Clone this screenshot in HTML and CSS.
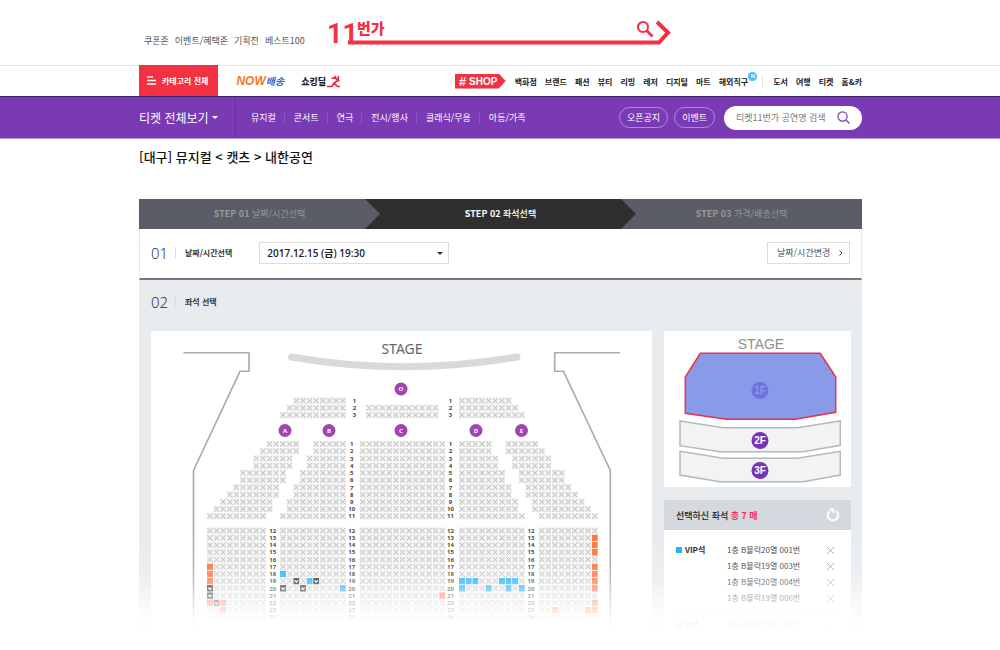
FILE: index.html
```
<!DOCTYPE html>
<html lang="ko">
<head>
    <meta charset="UTF-8">
    <meta name="viewport" content="width=device-width, initial-scale=1.0">
    <title>11번가 티켓 - 좌석선택</title>
    <link rel="stylesheet" href="styles.css">
</head>
<body>
    <header class="top">
        <div class="wrap top-inner">
            <nav class="top-links">
                <a href="#">쿠폰존</a>
                <a href="#">이벤트/혜택존</a>
                <a href="#">기획전</a>
                <a href="#">베스트100</a>
            </nav>
            <a href="#" class="logo" aria-label="11번가">
                <svg width="350" height="48" viewBox="-6 -10 350 48">
                    <g fill="#f43142">
                        <text class="logo-num" x="-1" y="22">11</text>
                        <text class="logo-name" x="29" y="13">번가</text>
                    </g>
                    <path d="M20 21.500H331L340 11.500L329 1" fill="none" stroke="#f43142" stroke-width="4"/>
                    <circle cx="315" cy="6" r="5" fill="none" stroke="#f43142" stroke-width="2.200"/>
                    <path d="M318.500 9.500L324.500 15.500" stroke="#f43142" stroke-width="2.600"/>
                </svg>
            </a>
        </div>
    </header>

    <div class="gnb">
        <div class="wrap gnb-inner">
            <button class="category" type="button">
                <svg width="10" height="9" viewBox="0 0 10 9"><path d="M0 1H6M0 4.500H9M0 8H9" stroke="#fff" stroke-width="1.300"/></svg>
                카테고리 전체
            </button>
            <a href="#" class="now"><b>NOW</b><span>배송</span></a>
            <a href="#" class="deal">쇼킹딜<svg width="14" height="13" viewBox="0 0 14 13"><path d="M0 11.500H5L7 8L10.500 11.500H13M7 8L11 5.500L12.500 6M7.500 1L9 3.500L11 5.500M4.500 3L9 3.500M11.500 1L11 5.500" fill="none" stroke="#e8233b" stroke-width="1.600"/></svg></a>
            <a href="#" class="shop"><i>#</i>SHOP</a>
            <nav class="gnb-links">
                <a href="#">백화점</a>
                <a href="#">브랜드</a>
                <a href="#">패션</a>
                <a href="#">뷰티</a>
                <a href="#">리빙</a>
                <a href="#">레저</a>
                <a href="#">디지털</a>
                <a href="#">마트</a>
                <a href="#" class="has-new">해외직구<span class="new">N</span></a>
                <a href="#" class="divided">도서</a>
                <a href="#">여행</a>
                <a href="#">티켓</a>
                <a href="#">홈&amp;카</a>
            </nav>
        </div>
    </div>

    <div class="ticket-bar">
        <div class="wrap ticket-inner">
            <button class="ticket-all" type="button">티켓 전체보기 <span class="caret"></span></button>
            <nav class="ticket-nav">
                <a href="#">뮤지컬</a>
                <a href="#">콘서트</a>
                <a href="#">연극</a>
                <a href="#">전시/행사</a>
                <a href="#">클래식/무용</a>
                <a href="#">아동/가족</a>
            </nav>
            <a href="#" class="pill">오픈공지</a>
            <a href="#" class="pill">이벤트</a>
            <form class="search">
                <input type="text" placeholder="티켓11번가 공연명 검색" aria-label="공연명 검색">
                <button type="submit" aria-label="검색">
                    <svg width="13" height="13" viewBox="0 0 13 13"><circle cx="5.500" cy="5.500" r="4.600" fill="none" stroke="#7a3ab5" stroke-width="1.200"/><path d="M9 9L12.500 12.500" stroke="#7a3ab5" stroke-width="1.300"/></svg>
                </button>
            </form>
        </div>
    </div>

    <main class="wrap">
        <h1>[대구] 뮤지컬 &lt; 캣츠 &gt; 내한공연</h1>

        <ol class="steps">
            <li><strong>STEP 01</strong> 날짜/시간선택</li>
            <li class="active"><strong>STEP 02</strong> 좌석선택</li>
            <li><strong>STEP 03</strong> 가격/배송선택</li>
        </ol>

        <section class="date-row">
            <span class="num">01</span>
            <label class="label" for="date">날짜/시간선택</label>
            <div class="select">
                <select id="date">
                    <option>2017.12.15 (금) 19:30</option>
                </select>
                <span class="caret"></span>
            </div>
            <button class="change" type="button">날짜/시간변경
                <svg width="4" height="6" viewBox="0 0 4 6"><path d="M0.500 0.500L3 3L0.500 5.500" fill="none" stroke="#444"/></svg>
            </button>
        </section>

        <section class="seat-section">
            <div class="seat-head">
                <span class="num">02</span>
                <h2 class="label">좌석 선택</h2>
            </div>

            <div class="seat-body">
                <div class="map">
                    <svg id="seatMap" viewBox="151 331 501 304">
                        <defs>
                            <symbol id="seat-x" viewBox="0 0 6 6.500">
                                <rect width="6" height="6.500" fill="#eee"/>
                                <path d="M0.300 0.500L5.700 6M5.700 0.500L0.300 6" stroke="#bdbdbd" stroke-width="0.900"/>
                            </symbol>
                            <symbol id="seat-v" viewBox="0 0 6 6.500">
                                <rect width="6" height="6.500" fill="#333"/>
                                <path d="M1.400 2.500L3 4.200L4.600 2.500" fill="none" stroke="#fff" stroke-width="1.200"/>
                            </symbol>
                            <symbol id="seat-o" viewBox="0 0 6 6.500"><rect width="6" height="6.500" fill="#ff7542"/></symbol>
                            <symbol id="seat-b" viewBox="0 0 6 6.500"><rect width="6" height="6.500" fill="#26b1fa"/></symbol>
                        </defs>
                        <text class="stage" x="402" y="354">STAGE</text>
                        <path d="M291.500 357Q404 376.500 517 357" fill="none" stroke="#d9d9d9" stroke-width="7" stroke-linecap="round"/>
                        <path d="M183.500 352.700H249V371.300H240L193.500 470.500V635M620 352.700H554.700V371.300H563.500L610.300 470.500V635" fill="none" stroke="#aaa" stroke-width="1.600"/>
                        <g id="seats"></g>
                    </svg>
                </div>

                <aside class="side">
                    <div class="floors">
                        <svg viewBox="664 331 187 156">
                            <text class="mini-stage" x="761" y="349">STAGE</text>
                            <path d="M700.300 353.300H820.300L835.700 377V412.300L795 419.300H726.700L685.300 413.300V377Z" fill="#879be8" stroke="#ec2f4b" stroke-width="1.500"/>
                            <g fill="#f3f3f3" stroke="#b0bac3" stroke-width="1.500">
                                <path d="M680 421L723.300 427.700H797.300L840.300 421V445.300L803.300 451.700H720L680 445.700Z"/>
                                <path d="M680 451.300L723.300 458.300H797.300L840.300 451.300V475L803.300 481.700H720L680 475Z"/>
                            </g>
                            <circle cx="760" cy="390.500" r="8.500" fill="#6f74db"/>
                            <circle cx="760" cy="440.500" r="8.500" fill="#7734b8"/>
                            <circle cx="760" cy="470.500" r="8.500" fill="#7734b8"/>
                            <text class="floor dim" x="760" y="394">1F</text>
                            <text class="floor" x="760" y="444">2F</text>
                            <text class="floor" x="760" y="474">3F</text>
                        </svg>
                    </div>

                    <div class="picked">
                        <div class="picked-head">
                            <h3>선택하신 좌석 <em>총 7 매</em></h3>
                            <button type="button" aria-label="초기화">
                                <svg width="14" height="14" viewBox="0 0 14 14"><path d="M10 3A5.200 5.200 0 1 1 4 3" fill="none" stroke="#fff" stroke-width="2"/><path d="M3 0.500H8V5.500Z" fill="#fff"/></svg>
                            </button>
                        </div>
                        <div class="grade">
                            <span class="grade-name vip">VIP석</span>
                            <ul>
                                <li>1층 B블럭20열 001번 <button type="button" aria-label="삭제"></button></li>
                                <li>1층 B블럭19열 003번 <button type="button" aria-label="삭제"></button></li>
                                <li>1층 B블럭20열 004번 <button type="button" aria-label="삭제"></button></li>
                                <li>1층 B블럭19열 006번 <button type="button" aria-label="삭제"></button></li>
                            </ul>
                        </div>
                        <div class="grade">
                            <span class="grade-name r">R석</span>
                            <ul>
                                <li>1층 A블럭20열 001번 <button type="button" aria-label="삭제"></button></li>
                            </ul>
                        </div>
                    </div>
                </aside>
            </div>
            <div class="fade"></div>
        </section>
    </main>

    <script src="seats.js"></script>
</body>
</html>
```
FILE: styles.css
```
* {
    box-sizing: border-box;
}

body {
    margin: 0;
    background: #fff;
    color: #333;
    font-family: "Noto Sans CJK KR", sans-serif;
    font-size: 9px;
}

a {
    color: inherit;
    text-decoration: none;
}

button {
    margin: 0;
    padding: 0;
    border: 0;
    background: none;
    color: inherit;
    font: inherit;
    cursor: pointer;
}

svg {
    display: block;
}

ol, ul, h1, h2, h3 {
    margin: 0;
    padding: 0;
    list-style: none;
}

.wrap {
    max-width: 724px;
    margin: 0 auto;
    padding-left: 1px;
}

/* top */
.top {
    border-bottom: 1px solid #e8e8e8;
}

.top-inner {
    display: flex;
    height: 65px;
    padding: 11px 0 0 6px;
}

.top-links {
    display: flex;
    gap: 6px;
    width: 178px;
    padding-top: 23px;
    line-height: 14px;
    color: #555;
    white-space: nowrap;
}

.logo-num {
    font: 700 27px Roboto, sans-serif;
}

.logo-name {
    font-size: 15px;
    font-weight: 900;
}

/* category bar */
.gnb-inner {
    display: flex;
    align-items: center;
    height: 30px;
}

.category {
    display: flex;
    align-items: center;
    gap: 5px;
    height: 31px;
    margin-top: -1px;
    padding: 0 10px 0 8px;
    background: #f43142;
    color: #fff;
    font-size: 8px;
    font-weight: 700;
    white-space: nowrap;
}

.now {
    display: flex;
    align-items: center;
    margin-left: 18px;
    font-style: italic;
    font-weight: 700;
}

.now b {
    color: #f9771e;
    font: italic 700 12px "Liberation Sans", sans-serif;
}

.now span {
    color: #3d6bd0;
    font-size: 10px;
    line-height: 14px;
}

.deal {
    display: flex;
    align-items: center;
    gap: 1px;
    margin-left: 17px;
    color: #222;
    font-weight: 900;
}

.shop {
    display: flex;
    align-items: center;
    gap: 3px;
    width: 51px;
    height: 15px;
    margin-left: auto;
    padding-left: 4px;
    background: #f43142;
    clip-path: polygon(0 0, 44px 0, 100% 50%, 44px 100%, 0 100%);
    color: #fff;
    font: 700 10px "Liberation Sans", sans-serif;
}

.shop i {
    font-size: 13px;
}

.gnb-links {
    display: flex;
    gap: 8px;
    margin-left: 9px;
    color: #222;
    font-size: 8px;
    font-weight: 700;
    white-space: nowrap;
}

.has-new {
    position: relative;
}

.new {
    position: absolute;
    top: -4px;
    left: 100%;
    width: 9px;
    height: 9px;
    border-radius: 50%;
    background: #4cbdec;
    color: #fff;
    font: 700 6px/9px "Liberation Sans", sans-serif;
    text-align: center;
}

.divided {
    margin-left: 6px;
    padding-left: 10px;
    border-left: 1px solid #ddd;
}

/* ticket bar */
.ticket-bar {
    border-top: 1px solid #3f2266;
    border-bottom: 1px solid #b497d2;
    background: #7a3ab5;
    color: #fff;
}

.ticket-inner {
    display: flex;
    align-items: center;
    height: 41px;
}

.ticket-all {
    display: flex;
    align-items: center;
    gap: 3px;
    width: 97px;
    height: 100%;
    border-right: 1px solid #6a2da3;
    font-size: 12px;
    white-space: nowrap;
}

.caret {
    border: 3px solid transparent;
    border-top-color: currentColor;
    border-bottom: 0;
}

.ticket-nav {
    display: flex;
    margin-left: 6px;
    font-size: 9px;
    line-height: 12px;
    white-space: nowrap;
}

.ticket-nav a {
    padding: 0 8px 0 9px;
}

.ticket-nav a + a {
    border-left: 1px solid #8b55c0;
}

.pill {
    height: 21px;
    margin-right: 6px;
    padding: 0 7px;
    border: 1px solid #b48ad8;
    border-radius: 11px;
    line-height: 19px;
    white-space: nowrap;
}

.ticket-nav + .pill {
    margin-left: auto;
}

.search {
    display: flex;
    align-items: center;
    width: 138px;
    height: 24px;
    margin-left: 3px;
    padding: 0 12px;
    border-radius: 12px;
    background: #fff;
}

.search input {
    flex: 1;
    min-width: 0;
    padding: 0;
    border: 0;
    outline: 0;
    background: none;
    font: inherit;
}

.search input::placeholder {
    color: #777;
}

/* title and steps */
h1 {
    padding: 9px 0 33px;
    color: #111;
    font-size: 13px;
    font-weight: 500;
    line-height: 18px;
}

.steps {
    display: grid;
    grid-template-columns: repeat(3, 1fr);
    height: 30px;
    background: #5a5d65;
    color: #97999d;
    font-size: 9px;
    line-height: 30px;
    text-align: center;
}

.steps li {
    position: relative;
}

.steps .active {
    background: #2f2f2f;
    color: #fff;
    font-weight: 500;
}

.steps li:first-child {
    background: linear-gradient(to left, #2f2f2f 15px, #5a5d65 15px);
}

.steps li:first-child::after,
.steps .active::after {
    content: "";
    position: absolute;
    top: 0;
    right: 0;
    width: 15px;
    height: 30px;
    background: #5a5d65;
    clip-path: polygon(0 0, 100% 50%, 0 100%);
}

.steps .active::after {
    right: -15px;
    z-index: 1;
    background: #2f2f2f;
}

/* date row */
.date-row,
.seat-head {
    display: flex;
    align-items: center;
    padding: 0 12px;
}

.date-row {
    height: 51px;
    padding: 0 11px 2px;
    border: 1px solid #e8e8e8;
    border-width: 0 1px;
    border-bottom: 2px solid #77787c;
}

.num {
    width: 24px;
    color: #222;
    font: 300 15px "Open Sans", sans-serif;
}

.label {
    padding-left: 9px;
    border-left: 1px solid #ddd;
    color: #333;
    font-size: 8px;
    font-weight: 700;
    line-height: 12px;
}

.select {
    position: relative;
    width: 190px;
    margin-left: 27px;
}

.select select {
    width: 100%;
    height: 22px;
    padding: 0 7px;
    border: 1px solid #ddd;
    border-radius: 0;
    background: #fff;
    color: #222;
    font: 600 10px "Open Sans", "Noto Sans CJK KR", sans-serif;
    appearance: none;
}

.select .caret {
    position: absolute;
    top: 10px;
    right: 6px;
}

.change {
    display: flex;
    align-items: center;
    justify-content: space-between;
    width: 83px;
    height: 22px;
    margin-left: auto;
    padding: 0 6px 0 9px;
    border: 1px solid #ddd;
    color: #555;
    white-space: nowrap;
}

/* seats */
.seat-section {
    position: relative;
    background: #e8ecef;
}

.seat-head {
    height: 51px;
    padding-bottom: 7px;
}

.seat-body {
    display: flex;
    gap: 12px;
    padding: 0 11px 0 12px;
}

.map {
    flex: 1;
    background: #fff;
}

.side {
    display: flex;
    flex-direction: column;
    gap: 13px;
    width: 187px;
}

.floors {
    background: #fff;
}

.stage {
    fill: #666;
    font: 14px "Noto Sans", sans-serif;
    text-anchor: middle;
}

.mini-stage {
    fill: #8f8f8f;
    font: 14px "Liberation Sans", sans-serif;
    text-anchor: middle;
}

.floor {
    fill: #fff;
    font: 700 10px "Liberation Sans", sans-serif;
    text-anchor: middle;
}

.floor.dim {
    fill: #8f97e8;
}

.row-no {
    fill: #444;
    font: 700 6px "Open Sans", sans-serif;
    text-anchor: middle;
}

.block {
    fill: #a144b0;
}

.block-name {
    fill: #fff;
    font: 700 6px "Open Sans", sans-serif;
    text-anchor: middle;
}

.picked {
    flex: 1;
    background: #fff;
}

.picked-head {
    display: flex;
    align-items: center;
    justify-content: space-between;
    height: 30px;
    margin-bottom: 12px;
    padding: 0 11px 0 12px;
    background: #d3d9df;
}

.picked-head h3 {
    color: #222;
    font-size: 9px;
    font-weight: 500;
}

.picked-head em {
    color: #f43152;
    font-style: normal;
    font-weight: 700;
}

.grade {
    display: flex;
    margin: 0 12px;
    font-size: 8px;
    line-height: 16px;
}

.grade + .grade {
    margin-top: 5px;
    padding-top: 5px;
    border-top: 1px solid #e4e4e4;
}

.grade-name {
    width: 51px;
    color: #222;
    font-weight: 700;
}

.grade-name::before {
    content: "";
    display: inline-block;
    width: 6px;
    height: 6px;
    margin-right: 3px;
    background: #1ab0ff;
}

.grade-name.r::before {
    background: #ff7542;
}

.grade ul {
    flex: 1;
}

.grade li {
    display: flex;
    align-items: center;
    justify-content: space-between;
    padding-right: 5px;
    color: #444;
}

.grade li button {
    width: 7px;
    height: 7px;
    background:
        linear-gradient(45deg, transparent 45%, #aaa 45%, #aaa 55%, transparent 55%),
        linear-gradient(-45deg, transparent 45%, #aaa 45%, #aaa 55%, transparent 55%);
}

.fade {
    position: absolute;
    right: 0;
    bottom: 0;
    left: 0;
    height: 105px;
    background: linear-gradient(rgba(255, 255, 255, 0), rgba(255, 255, 255, 0.080) 32%, rgba(255, 255, 255, 0.300) 50%, rgba(255, 255, 255, 0.700) 70%, rgba(255, 255, 255, 0.930) 85%, #fff 98%);
    pointer-events: none;
}
```
FILE: seats.js
```
// seat pitch in map units
const SEAT_W = 6.63;
const SEAT_H = 7.22;

const seats = document.getElementById("seats");
let html = "";

// seats marked "o" (R), "b" (VIP) or "v" (picked), by block, row and index
const marks = {
    A17: { 0: "o" }, A18: { 0: "o" }, A19: { 0: "o" }, A20: { 0: "v" }, A21: { 0: "v" },
    A22: { 0: "o", 1: "v", 2: "o" }, A23: { 2: "o" },
    B18: { 0: "b" }, B19: { 2: "v", 4: "b", 5: "v" }, B20: { 0: "v", 3: "v", 9: "b" },
    C21: { 12: "o" },
    D19: { 0: "b", 1: "b", 2: "b", 6: "b", 7: "b", 8: "b" }, D20: { 0: "b", 4: "b", 7: "b", 9: "b" },
    E13: { 8: "o" }, E14: { 8: "o" }, E15: { 8: "o" }, E17: { 8: "o" }, E18: { 8: "o" },
    E19: { 8: "o" }, E20: { 8: "o" }, E22: { 8: "o" }, E23: { 2: "o", 7: "o", 8: "o" }
};

const addRow = (block, row, x, y, start, count) => {
    const rowMarks = marks[block + row] || {};
    for (let i = start; i < start + count; i++) {
        const type = rowMarks[i] || "x";
        html += `<use href="#seat-${type}" x="${x + i * SEAT_W}" y="${y}" width="6.2" height="6.7"/>`;
    }
};

const addLabel = (x, y, row) => {
    html += `<text class="row-no" x="${x}" y="${y + 5.5}">${row}</text>`;
};

// front rows
for (let row = 1; row <= 3; row++) {
    const y = 397.3 + (row - 1) * SEAT_H;
    addRow("OL", row, 280, y, 3 - row, 7 + row);
    if (row > 1) addRow("OC", row, 366, y, 0, 11);
    addRow("OR", row, 459, y, 0, 7 + row);
    addLabel(354.5, y, row);
    addLabel(450.5, y, row);
}

// [start, count] of rows 1 to 11 in the slanted side blocks
const blockA = [[9, 5], [8, 6], [7, 6], [7, 6], [5, 7], [5, 7], [4, 7], [3, 8], [2, 8], [1, 9], [0, 9]];
const blockE = [[-5, 5], [-5, 6], [-4, 6], [-4, 6], [-3, 7], [-3, 7], [-2, 7], [-2, 8], [-1, 8], [-1, 9], [0, 9]];

for (let row = 1; row <= 24; row++) {
    const back = row > 11;
    const y = back ? 527.3 + (row - 12) * SEAT_H : 440.7 + (row - 1) * SEAT_H;
    const inner = back ? 10 : 5 + Math.floor((row - 1) / 2);
    const [aStart, aCount] = back ? [0, 9] : blockA[row - 1];
    const [eStart, eCount] = back ? [0, 9] : blockE[row - 1];

    addRow("A", row, 206.8, y, aStart, aCount);
    addRow("B", row, 280, y, 10 - inner, inner);
    addRow("C", row, 359.6, y, 0, 13);
    addRow("D", row, 459, y, 0, inner);
    addRow("E", row, 538.6, y, eStart, eCount);

    addLabel(351.8, y, row);
    addLabel(450.5, y, row);
    if (back) {
        addLabel(272.8, y, row);
        addLabel(531, y, row);
    }
}

// block badges
const badges = [["O", 401, 389], ["A", 285, 430.5], ["B", 329, 430.5], ["C", 401, 430.5], ["D", 476, 430.5], ["E", 521.5, 430.5]];
badges.forEach(([name, x, y]) => {
    html += `<circle class="block" cx="${x}" cy="${y}" r="6.5"/><text class="block-name" x="${x}" y="${y + 2}">${name}</text>`;
});

seats.innerHTML = html;
```
